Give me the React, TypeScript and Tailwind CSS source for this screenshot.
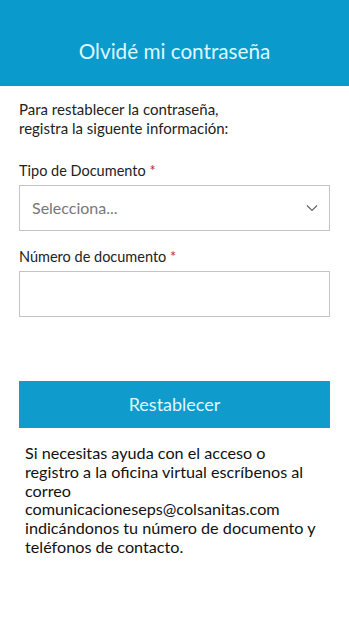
import React from "react";

export default function App() {
  return (
    <div className="w-[349px] h-[620px] bg-white" style={{ fontFamily: 'Lato, "Noto Sans", sans-serif' }}>
      <div className="h-[86px] bg-[#0b9acc] flex items-center justify-center pt-[18px]">
        <h1 className="text-[20.7px] text-[#dff7ff] font-normal">Olvidé mi contraseña</h1>
      </div>
      <div className="px-[19px] pt-[14px]">
        <p className="text-[15px] leading-[19px] text-[#222]">
          Para restablecer la contraseña,
          <br />
          registra la siguente información:
        </p>
        <label className="block mt-[23px] text-[14.5px] leading-[19px] text-[#222]">
          Tipo de Documento <span className="text-[#c0283c]">*</span>
        </label>
        <div className="mt-[5px] h-[46px] border border-[#c4c4c4] flex items-center justify-between pl-[12px] pr-[10px]">
          <span className="text-[16px] text-[#777]">Selecciona...</span>
          <svg width="14" height="14" viewBox="0 0 14 14" fill="none" stroke="#666" strokeWidth="1.2">
            <path d="M2 4.5 L7 9.5 L12 4.5" />
          </svg>
        </div>
        <label className="block mt-[16px] text-[14.5px] leading-[19px] text-[#222]">
          Número de documento <span className="text-[#c0283c]">*</span>
        </label>
        <div className="mt-[5px] h-[46px] border border-[#c4c4c4]" />
        <button className="mt-[64px] w-full h-[47px] bg-[#0f9bcc] text-[#dff7ff] text-[18px]">Restablecer</button>
        <p className="mt-[16px] pl-[6px] pr-[8px] text-[16.2px] leading-[18.8px] text-[#111]">
          Si necesitas ayuda con el acceso o registro a la oficina virtual escríbenos al correo comunicacioneseps@colsanitas.com indicándonos tu número de documento y teléfonos de contacto.
        </p>
      </div>
    </div>
  );
}
